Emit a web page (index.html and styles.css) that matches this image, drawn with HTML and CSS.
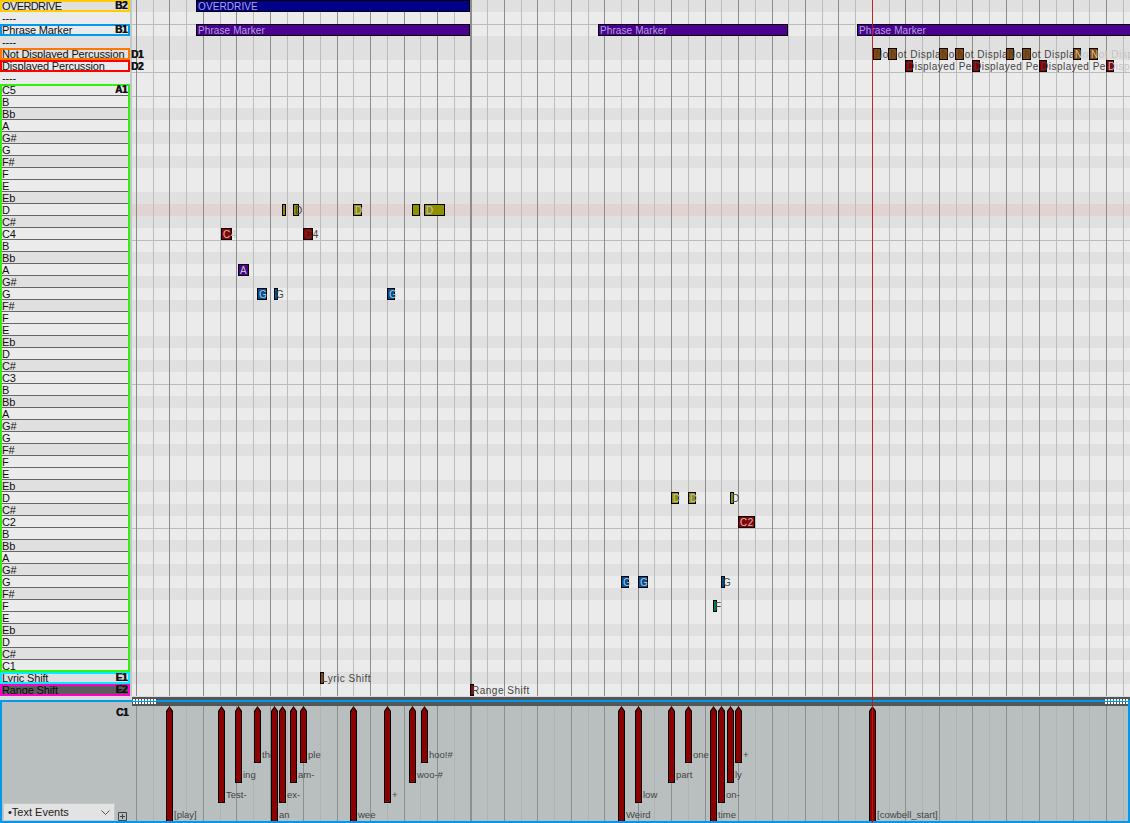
FILE: index.html
```html
<!DOCTYPE html>
<html lang="en">
<head>
<meta charset="utf-8">
<title>Track view</title>
<link rel="stylesheet" href="styles.css">
</head>
<body>
<div class="page">
  <div class="upper">
    <div class="labels">
      <div class="lb k o-yellow"><span class="narrow">OVERDRIVE</span><b class="tag">B2</b></div>
      <div class="lb"><span>----</span></div>
      <div class="lb o-blue"><span>Phrase Marker</span><b class="tag">B1</b></div>
      <div class="lb k"><span>----</span></div>
      <div class="lb k o-orange"><span>Not Displayed Percussion</span><b class="tag out">D1</b></div>
      <div class="lb o-red"><span>Displayed Percussion</span><b class="tag out">D2</b></div>
      <div class="lb"><span>----</span></div>
      <div class="keys">
        <div class="lb s"><span>C5</span><b class="tag">A1</b></div>
        <div class="lb s"><span>B</span></div><div class="lb s k"><span>Bb</span></div><div class="lb s"><span>A</span></div><div class="lb s k"><span>G#</span></div><div class="lb s"><span>G</span></div><div class="lb s k"><span>F#</span></div><div class="lb s"><span>F</span></div><div class="lb s"><span>E</span></div><div class="lb s k"><span>Eb</span></div><div class="lb s"><span>D</span></div><div class="lb s k"><span>C#</span></div>
        <div class="lb s"><span>C4</span></div>
        <div class="lb s"><span>B</span></div><div class="lb s k"><span>Bb</span></div><div class="lb s"><span>A</span></div><div class="lb s k"><span>G#</span></div><div class="lb s"><span>G</span></div><div class="lb s k"><span>F#</span></div><div class="lb s"><span>F</span></div><div class="lb s"><span>E</span></div><div class="lb s k"><span>Eb</span></div><div class="lb s"><span>D</span></div><div class="lb s k"><span>C#</span></div>
        <div class="lb s"><span>C3</span></div>
        <div class="lb s"><span>B</span></div><div class="lb s k"><span>Bb</span></div><div class="lb s"><span>A</span></div><div class="lb s k"><span>G#</span></div><div class="lb s"><span>G</span></div><div class="lb s k"><span>F#</span></div><div class="lb s"><span>F</span></div><div class="lb s"><span>E</span></div><div class="lb s k"><span>Eb</span></div><div class="lb s"><span>D</span></div><div class="lb s k"><span>C#</span></div>
        <div class="lb s"><span>C2</span></div>
        <div class="lb s"><span>B</span></div><div class="lb s k"><span>Bb</span></div><div class="lb s"><span>A</span></div><div class="lb s k"><span>G#</span></div><div class="lb s"><span>G</span></div><div class="lb s k"><span>F#</span></div><div class="lb s"><span>F</span></div><div class="lb s"><span>E</span></div><div class="lb s k"><span>Eb</span></div><div class="lb s"><span>D</span></div><div class="lb s k"><span>C#</span></div>
        <div class="lb s"><span>C1</span></div>
      </div>
      <div class="lb k o-cyan"><span>Lyric Shift</span><b class="tag">E1</b></div>
      <div class="lb dark o-magenta"><span>Range Shift</span><b class="tag">E2</b></div>
    </div>
    <div class="strip"></div>
    <div class="grid">
      <div class="r k"></div><div class="r"></div><div class="r ln"></div><div class="r k"></div><div class="r k"></div><div class="r"></div><div class="r ln"></div>

      <div class="r"></div>
      <div class="r ln"></div><div class="r k"></div><div class="r"></div><div class="r k"></div><div class="r"></div><div class="r k"></div><div class="r"></div><div class="r"></div><div class="r k"></div><div class="r hl"></div><div class="r k"></div><div class="r"></div>
      <div class="r ln"></div><div class="r k"></div><div class="r"></div><div class="r k"></div><div class="r"></div><div class="r k"></div><div class="r"></div><div class="r"></div><div class="r k"></div><div class="r"></div><div class="r k"></div><div class="r"></div>
      <div class="r ln"></div><div class="r k"></div><div class="r"></div><div class="r k"></div><div class="r"></div><div class="r k"></div><div class="r"></div><div class="r"></div><div class="r k"></div><div class="r"></div><div class="r k"></div><div class="r"></div>
      <div class="r ln"></div><div class="r k"></div><div class="r"></div><div class="r k"></div><div class="r"></div><div class="r k"></div><div class="r"></div><div class="r"></div><div class="r k"></div><div class="r"></div><div class="r k"></div><div class="r"></div>
      <div class="r k"></div><div class="r"></div>

      <div class="vlines"></div>

      <div class="n fg-bar" style="left:64px;top:0;width:274px"><i class="bx navy"></i><span>OVERDRIVE</span></div>
      <div class="n fg-bar" style="left:64px;top:24px;width:274px"><i class="bx purple"></i><span>Phrase Marker</span></div>
      <div class="n fg-bar" style="left:466px;top:24px;width:190px"><i class="bx purple"></i><span>Phrase Marker</span></div>
      <div class="n fg-bar" style="left:725px;top:24px;width:280px"><i class="bx purple"></i><span>Phrase Marker</span></div>

      <div class="n clip" style="left:741px;top:48px;width:15px"><i class="bx brown" style="width:8px"></i><span>Not Displayed Percussion</span></div>
      <div class="n clip" style="left:756px;top:48px;width:51px"><i class="bx brown" style="width:9px"></i><span>Not Displayed Percussion</span></div>
      <div class="n clip" style="left:807px;top:48px;width:16px"><i class="bx brown" style="width:9px"></i><span>Not Displayed Percussion</span></div>
      <div class="n clip" style="left:823px;top:48px;width:51px"><i class="bx brown" style="width:9px"></i><span>Not Displayed Percussion</span></div>
      <div class="n clip" style="left:874px;top:48px;width:16px"><i class="bx brown" style="width:8px"></i><span>Not Displayed Percussion</span></div>
      <div class="n clip" style="left:890px;top:48px;width:51px"><i class="bx brown" style="width:9px"></i><span>Not Displayed Percussion</span></div>
      <div class="n clip fg-light" style="left:941px;top:48px;width:16px"><i class="bx brown" style="width:8px"></i><span>Not Displayed Percussion</span></div>
      <div class="n clip fg-light" style="left:957px;top:48px;width:41px"><i class="bx brown" style="width:9px"></i><span>Not Displayed Percussion</span></div>

      <div class="n clip" style="left:773px;top:60px;width:67px"><i class="bx red" style="width:8px"></i><span>Displayed Percussion</span></div>
      <div class="n clip" style="left:840px;top:60px;width:67px"><i class="bx red" style="width:8px"></i><span>Displayed Percussion</span></div>
      <div class="n clip" style="left:907px;top:60px;width:67px"><i class="bx red" style="width:8px"></i><span>Displayed Percussion</span></div>
      <div class="n clip fg-light" style="left:974px;top:60px;width:24px"><i class="bx red" style="width:8px"></i><span>Displayed Percussion</span></div>

      <div class="n clip" style="left:150px;top:204px;width:4px"><i class="bx olive"></i></div>
      <div class="n" style="left:161px;top:204px;width:6px"><i class="bx olive"></i><span>D</span></div>
      <div class="n fg-light" style="left:221px;top:204px;width:9px"><i class="bx olive"></i><span>D</span></div>
      <div class="n clip" style="left:280px;top:204px;width:8px"><i class="bx olive"></i></div>
      <div class="n fg-light" style="left:292px;top:204px;width:21px"><i class="bx olive"></i><span>D</span></div>

      <div class="n fg-light" style="left:89px;top:228px;width:11px"><i class="bx red"></i><span>C4</span></div>
      <div class="n" style="left:171px;top:228px;width:10px"><i class="bx red"></i><span>C4</span></div>
      <div class="n fg-light" style="left:106px;top:264px;width:11px"><i class="bx purple"></i><span>A</span></div>
      <div class="n fg-light" style="left:125px;top:288px;width:10px"><i class="bx blue"></i><span>G</span></div>
      <div class="n" style="left:142px;top:288px;width:4px"><i class="bx blue"></i><span>G</span></div>
      <div class="n fg-light" style="left:255px;top:288px;width:8px"><i class="bx blue"></i><span>G</span></div>

      <div class="n fg-light" style="left:539px;top:492px;width:8px"><i class="bx olive"></i><span>D</span></div>
      <div class="n fg-light" style="left:556px;top:492px;width:8px"><i class="bx olive"></i><span>D</span></div>
      <div class="n" style="left:598px;top:492px;width:4px"><i class="bx olive"></i><span>D</span></div>
      <div class="n fg-light" style="left:606px;top:516px;width:17px"><i class="bx red"></i><span>C2</span></div>
      <div class="n fg-light" style="left:489px;top:576px;width:8px"><i class="bx blue"></i><span>G</span></div>
      <div class="n fg-light" style="left:506px;top:576px;width:10px"><i class="bx blue"></i><span>G</span></div>
      <div class="n" style="left:589px;top:576px;width:4px"><i class="bx blue"></i><span>G</span></div>
      <div class="n" style="left:581px;top:600px;width:4px"><i class="bx green"></i><span>F</span></div>

      <div class="n" style="left:188px;top:672px;width:4px"><i class="bx brown"></i><span>Lyric Shift</span></div>
      <div class="n" style="left:338px;top:684px;width:4px"><i class="bx red"></i><span>Range Shift</span></div>
    </div>
  </div>

  <div class="divider"><div class="divider-bar"></div></div>

  <div class="panel">
    <div class="panel-side">
      <b class="tag side-tag">C1</b>
      <div class="picker">
        <div class="select"><span>•Text Events</span>
          <svg class="chev" width="9" height="5" viewBox="0 0 9 5"><path d="M.5.5 4.500 4.500 8.500.5" fill="none" stroke="#555"/></svg>
        </div>
        <svg class="plus" width="9" height="9" viewBox="0 0 9 9"><path d="M.5.5h8v8h-8zM4.500 2v5M2 4.500h5" fill="none" stroke="#444"/></svg>
      </div>
    </div>
    <div class="panel-head"></div>
    <div class="pvlines"></div>

    <div class="ev l0" style="left:166px"><i></i><span>[play]</span></div>
    <div class="ev l1" style="left:218px"><i></i><span>Test-</span></div>
    <div class="ev l2" style="left:235px"><i></i><span>ing</span></div>
    <div class="ev l3" style="left:254px"><i></i><span>thi</span></div>
    <div class="ev l0" style="left:271px"><i></i><span>an</span></div>
    <div class="ev l1" style="left:279px"><i></i><span>ex-</span></div>
    <div class="ev l2" style="left:290px"><i></i><span>am-</span></div>
    <div class="ev l3" style="left:300px"><i></i><span>ple</span></div>
    <div class="ev l0" style="left:350px"><i></i><span>wee</span></div>
    <div class="ev l1" style="left:384px"><i></i><span>+</span></div>
    <div class="ev l2" style="left:409px"><i></i><span>woo-#</span></div>
    <div class="ev l3" style="left:421px"><i></i><span>hoo!#</span></div>
    <div class="ev l0" style="left:618px"><i></i><span>Weird</span></div>
    <div class="ev l1" style="left:635px"><i></i><span>low</span></div>
    <div class="ev l2" style="left:668px"><i></i><span>part</span></div>
    <div class="ev l3" style="left:685px"><i></i><span>one</span></div>
    <div class="ev l0" style="left:710px"><i></i><span>time</span></div>
    <div class="ev l1" style="left:718px"><i></i><span>on-</span></div>
    <div class="ev l2" style="left:727px"><i></i><span>ly</span></div>
    <div class="ev l3" style="left:735px"><i></i><span>+</span></div>
    <div class="ev l0" style="left:869px"><i></i><span>[cowbell_start]</span></div>

    <div class="grip grip-l"></div>
    <div class="grip grip-r"></div>
  </div>

  <div class="playhead"></div>
</div>
</body>
</html>
```
FILE: styles.css
```css
* { box-sizing: border-box; }
html, body { margin: 0; padding: 0; }
body { background: #e9e9e9; overflow: hidden; }

.page {
  position: relative;
  width: 1130px;
  height: 823px;
  overflow: hidden;
  display: flex;
  flex-direction: column;
  font-family: "Liberation Sans", Arial, sans-serif;
}

.upper { display: flex; height: 696px; }

/* label column */
.labels { width: 130px; flex: none; position: relative; }
.lb {
  position: relative;
  display: flex;
  justify-content: space-between;
  align-items: center;
  height: 12px;
  padding: 0 3px 0 2px;
  background: #ebebeb;
  font-size: 11px;
  line-height: 12px;
  letter-spacing: -0.15px;
  color: #111;
  white-space: nowrap;
}
.lb.k { background: #e0e0e0; }
.lb.s { position: static; box-shadow: inset 0 -1px 0 #666; }
.lb.dark { background: #5c5c5c; color: #0c0c0c; }
.narrow { letter-spacing: -0.6px; }
.o-yellow { outline: 2px solid #ffcc00; outline-offset: -2px; }
.o-blue { outline: 2px solid #0099ee; outline-offset: -2px; }
.o-orange { outline: 2px solid #ff7700; outline-offset: -2px; }
.o-red { outline: 2px solid #ff0000; outline-offset: -2px; }
.o-cyan { outline: 2px solid #00eeff; outline-offset: -2px; }
.o-magenta { outline: 2px solid #ff00cc; outline-offset: -2px; }
.keys { outline: 2px solid #33ee11; outline-offset: -2px; }

.tag {
  position: relative;
  z-index: 2;
  font-size: 10px;
  line-height: 12px;
  font-weight: 700;
  letter-spacing: -0.4px;
  color: #111;
  text-shadow: 0.6px 0 0 #111;
}
.lb .tag { top: 0; }
.tag.out { position: absolute; left: 131px; top: 1px; }

.strip { width: 2px; flex: none; background: #c0c8c8; }

/* note grid */
.grid { position: relative; flex: 1; overflow: hidden; }
.r { height: 12px; background: #ebebeb; }
.r.k { background: #e0e0e0; }
.r.hl { background: #e2d3d3; }
.r.ln { box-shadow: inset 0 1px 0 #bcbcbc; }
.vlines {
  position: absolute;
  left: 4px; top: 0; right: 0; bottom: 0;
  background: repeating-linear-gradient(90deg,
    #8c8c8c 0, #8c8c8c 1px, transparent 1px, transparent 16.725px,
    #bcbcbc 16.725px, #bcbcbc 17.725px, transparent 17.725px, transparent 33.45px);
}

.n {
  position: absolute;
  height: 12px;
  font-size: 10px;
  line-height: 14px;
  letter-spacing: 0.5px;
  color: #444;
  white-space: nowrap;
}
.n.clip { overflow: hidden; }
.n span { position: relative; display: block; padding-left: 2px; }
.bx {
  position: absolute;
  left: 0; top: 0;
  width: 100%;
  height: 100%;
  border: 1px solid #000;
}
.fg-light { color: #c4c4c4; }
.fg-bar { color: #b0a2dc; letter-spacing: 0.1px; }
.navy { background: #00008b; }
.purple { background: #4b0090; }
.brown { background: #8b4a00; }
.red { background: #8b0000; }
.olive { background: #8f8f00; }
.blue { background: #00509b; }
.green { background: #008040; }

/* divider */
.divider { height: 4px; flex: none; background: #d8dcdc; }
.divider-bar { margin: 1px 0 0 132px; height: 3px; background: #555; }

/* lower panel */
.panel {
  position: relative;
  flex: 1;
  background: #b9bfbf;
}
.panel::after {
  content: "";
  position: absolute;
  inset: 0;
  border: 2px solid #0099ee;
  z-index: 3;
  pointer-events: none;
}
.panel-head {
  position: absolute;
  left: 132px; right: 0; top: 0;
  height: 6px;
  background: #555;
}
.panel-side {
  position: absolute;
  left: 0; top: 0; bottom: 0;
  width: 130px;
  display: flex;
  flex-direction: column;
  justify-content: space-between;
  padding: 7px 2px 2px 3px;
}
.side-tag { align-self: flex-end; }
.picker { display: flex; align-items: flex-end; gap: 3px; }
.select {
  width: 112px;
  height: 18px;
  display: flex;
  align-items: center;
  justify-content: space-between;
  padding: 0 4px 0 4px;
  background: #e3e3e3;
  border: 1px solid #c8c8c8;
  font-size: 11px;
  color: #222;
}
.chev { flex: none; }
.plus { flex: none; }

.pvlines {
  position: absolute;
  left: 136px; right: 0; top: 6px; bottom: 0;
  background: repeating-linear-gradient(90deg,
    #8a8f8f 0, #8a8f8f 1px, transparent 1px, transparent 16.725px,
    #aeb4b4 16.725px, #aeb4b4 17.725px, transparent 17.725px, transparent 33.45px);
}

.ev { position: absolute; top: 6px; width: 7px; }
.ev.l0 { height: 117px; }
.ev.l1 { height: 97px; }
.ev.l2 { height: 77px; }
.ev.l3 { height: 57px; }
.ev i {
  position: absolute;
  inset: 0;
  background: #000;
  clip-path: polygon(50% 0, 100% 5px, 100% 100%, 0 100%, 0 5px);
}
.ev i::after {
  content: "";
  position: absolute;
  inset: 1px;
  background: #8b0000;
  clip-path: polygon(50% 0, 100% 5px, 100% 100%, 0 100%, 0 5px);
}
.ev span {
  position: absolute;
  left: 8px;
  bottom: 2px;
  font-size: 9.5px;
  line-height: 12px;
  color: #444;
  white-space: nowrap;
}

.grip {
  position: absolute;
  top: -1px;
  width: 24px;
  height: 5px;
  z-index: 4;
  background:
    linear-gradient(#0099ee, #0099ee) 0 2px / 100% 1px no-repeat,
    repeating-linear-gradient(90deg, #fff 0, #fff 2px, transparent 2px, transparent 3px);
}
.grip-l { left: 133px; }
.grip-r { right: 1px; }

.playhead {
  position: absolute;
  left: 872px; top: 0; bottom: 0;
  width: 1px;
  background: rgba(200, 20, 20, 0.85);
  z-index: 5;
}
```
